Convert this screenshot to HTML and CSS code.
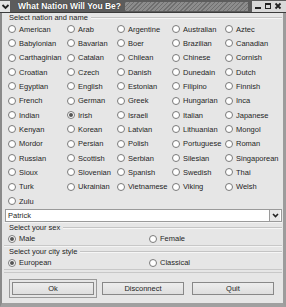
FILE: index.html
```html
<!DOCTYPE html>
<html lang="en">
<head>
  <meta charset="UTF-8">
  <title>What Nation Will You Be?</title>
  <link rel="stylesheet" href="styles.css">
</head>
<body>
<div class="window">
  <!-- Title bar -->
  <div class="titlebar">
    <span class="menu-btn">
      <svg width="9" height="9" viewBox="0 0 9 9"><path d="M1.5 3 L4.5 6 L7.5 3" fill="none" stroke="#222" stroke-width="1.8"/></svg>
    </span>
    <span class="title">What Nation Will You Be?</span>
    <span class="hatch"></span>
    <span class="controls">
      <span class="ctl"><svg width="8" height="8" viewBox="0 0 8 8"><rect x="1" y="5" width="6" height="2" fill="#222"/></svg></span>
      <span class="ctl"><svg width="8" height="8" viewBox="0 0 8 8"><rect x="1.5" y="1.5" width="5" height="5" fill="none" stroke="#222"/><rect x="1" y="1" width="6" height="2" fill="#222"/></svg></span>
      <span class="ctl"><svg width="8" height="8" viewBox="0 0 8 8"><path d="M1.5 1.5 L6.5 6.5 M6.5 1.5 L1.5 6.5" stroke="#222" stroke-width="1.8"/></svg></span>
    </span>
  </div>

  <div class="content">
    <!-- Nation and name -->
    <div class="group">
      <div class="group-title"><span>Select nation and name</span><span class="rule"></span></div>
      <div class="nations">
        <label class="opt"><span class="radio"></span>American</label>
        <label class="opt"><span class="radio"></span>Arab</label>
        <label class="opt"><span class="radio"></span>Argentine</label>
        <label class="opt"><span class="radio"></span>Australian</label>
        <label class="opt"><span class="radio"></span>Aztec</label>
        <label class="opt"><span class="radio"></span>Babylonian</label>
        <label class="opt"><span class="radio"></span>Bavarian</label>
        <label class="opt"><span class="radio"></span>Boer</label>
        <label class="opt"><span class="radio"></span>Brazilian</label>
        <label class="opt"><span class="radio"></span>Canadian</label>
        <label class="opt"><span class="radio"></span>Carthaginian</label>
        <label class="opt"><span class="radio"></span>Catalan</label>
        <label class="opt"><span class="radio"></span>Chilean</label>
        <label class="opt"><span class="radio"></span>Chinese</label>
        <label class="opt"><span class="radio"></span>Cornish</label>
        <label class="opt"><span class="radio"></span>Croatian</label>
        <label class="opt"><span class="radio"></span>Czech</label>
        <label class="opt"><span class="radio"></span>Danish</label>
        <label class="opt"><span class="radio"></span>Dunedain</label>
        <label class="opt"><span class="radio"></span>Dutch</label>
        <label class="opt"><span class="radio"></span>Egyptian</label>
        <label class="opt"><span class="radio"></span>English</label>
        <label class="opt"><span class="radio"></span>Estonian</label>
        <label class="opt"><span class="radio"></span>Filipino</label>
        <label class="opt"><span class="radio"></span>Finnish</label>
        <label class="opt"><span class="radio"></span>French</label>
        <label class="opt"><span class="radio"></span>German</label>
        <label class="opt"><span class="radio"></span>Greek</label>
        <label class="opt"><span class="radio"></span>Hungarian</label>
        <label class="opt"><span class="radio"></span>Inca</label>
        <label class="opt"><span class="radio"></span>Indian</label>
        <label class="opt"><span class="radio checked"></span>Irish</label>
        <label class="opt"><span class="radio"></span>Israeli</label>
        <label class="opt"><span class="radio"></span>Italian</label>
        <label class="opt"><span class="radio"></span>Japanese</label>
        <label class="opt"><span class="radio"></span>Kenyan</label>
        <label class="opt"><span class="radio"></span>Korean</label>
        <label class="opt"><span class="radio"></span>Latvian</label>
        <label class="opt"><span class="radio"></span>Lithuanian</label>
        <label class="opt"><span class="radio"></span>Mongol</label>
        <label class="opt"><span class="radio"></span>Mordor</label>
        <label class="opt"><span class="radio"></span>Persian</label>
        <label class="opt"><span class="radio"></span>Polish</label>
        <label class="opt"><span class="radio"></span>Portuguese</label>
        <label class="opt"><span class="radio"></span>Roman</label>
        <label class="opt"><span class="radio"></span>Russian</label>
        <label class="opt"><span class="radio"></span>Scottish</label>
        <label class="opt"><span class="radio"></span>Serbian</label>
        <label class="opt"><span class="radio"></span>Silesian</label>
        <label class="opt"><span class="radio"></span>Singaporean</label>
        <label class="opt"><span class="radio"></span>Sioux</label>
        <label class="opt"><span class="radio"></span>Slovenian</label>
        <label class="opt"><span class="radio"></span>Spanish</label>
        <label class="opt"><span class="radio"></span>Swedish</label>
        <label class="opt"><span class="radio"></span>Thai</label>
        <label class="opt"><span class="radio"></span>Turk</label>
        <label class="opt"><span class="radio"></span>Ukrainian</label>
        <label class="opt"><span class="radio"></span>Vietnamese</label>
        <label class="opt"><span class="radio"></span>Viking</label>
        <label class="opt"><span class="radio"></span>Welsh</label>
        <label class="opt"><span class="radio"></span>Zulu</label>
      </div>
      <div class="combo">
        <span class="combo-text">Patrick</span>
        <span class="combo-btn">
          <svg width="7" height="7" viewBox="0 0 7 7"><path d="M1 2 L3.5 4.5 L6 2" fill="none" stroke="#222" stroke-width="1.6"/></svg>
        </span>
      </div>
    </div>

    <!-- Sex -->
    <div class="group">
      <div class="group-title"><span>Select your sex</span><span class="rule"></span></div>
      <div class="pair">
        <label class="opt"><span class="radio checked"></span>Male</label>
        <label class="opt"><span class="radio"></span>Female</label>
      </div>
    </div>

    <!-- City style -->
    <div class="group">
      <div class="group-title"><span>Select your city style</span><span class="rule"></span></div>
      <div class="pair">
        <label class="opt"><span class="radio checked"></span>European</label>
        <label class="opt"><span class="radio"></span>Classical</label>
      </div>
    </div>

    <!-- Buttons -->
    <div class="buttons">
      <span class="focus"><button class="btn">Ok</button></span>
      <button class="btn">Disconnect</button>
      <button class="btn">Quit</button>
    </div>
  </div>
</div>
</body>
</html>
```

FILE: styles.css
```css
body {
  margin: 0;
  font-family: "Liberation Sans", Arial, sans-serif;
  font-size: 7.5px;
  color: #1f1f1f;
  background: #e6e6e6;
}
.window {
  width: 286px;
  height: 307px;
  box-sizing: border-box;
  display: flex;
  flex-direction: column;
  background: #e6e6e6;
  border-left: 2px solid #8a8a8a;
  border-right: 3px solid #9c9c9c;
  border-bottom: 4px solid #a0a0a0;
}

/* Title bar */
.titlebar {
  height: 12px;
  display: flex;
  align-items: center;
  background: #5c5c5c;
  border-bottom: 1px solid #3c3c3c;
  margin-left: -2px;
  margin-right: -3px;
}
.menu-btn {
  width: 10px;
  height: 11px;
  display: flex;
  align-items: center;
  justify-content: center;
  background: #e4e4e4;
}
.title {
  color: #fff;
  font-weight: bold;
  font-size: 8.5px;
  margin-left: 8px;
  text-shadow: 0 0 1px #222;
  white-space: nowrap;
}
.hatch {
  flex: 1;
  height: 9px;
  margin: 0 4px;
  background: repeating-linear-gradient(135deg, #6f6f6f 0 1px, #8c8c8c 1px 3px);
}
.controls {
  display: flex;
  align-items: center;
  gap: 2px;
  height: 11px;
  padding: 0 4px 0 2px;
  background: #d9d9d9;
}
.ctl {
  width: 8px;
  height: 8px;
  display: flex;
}

/* Content */
.content {
  flex: 1;
  display: flex;
  flex-direction: column;
  padding: 0 1px 0 2px;
}
.group-title {
  display: flex;
  align-items: center;
  height: 9px;
  padding-left: 5px;
}
.group-title .rule {
  flex: 1;
  margin-left: 3px;
  border-top: 1px solid #c4c4c4;
  border-bottom: 1px solid #f6f6f6;
}
.nations {
  display: grid;
  grid-template-columns: 59px 50px 55px 53px auto;
  grid-auto-rows: 14.33px;
  padding-left: 4px;
}
.opt {
  display: flex;
  align-items: center;
  gap: 3px;
  white-space: nowrap;
}
.radio {
  width: 6px;
  height: 6px;
  border: 1px solid #7c7c7c;
  border-radius: 50%;
  background: radial-gradient(circle at 60% 60%, #fff 0 60%, #e0e0e0 100%);
  display: flex;
  align-items: center;
  justify-content: center;
  flex: none;
}
.radio.checked::after {
  content: "";
  width: 4px;
  height: 4px;
  border-radius: 50%;
  background: #555;
}

.combo {
  height: 13px;
  margin: 1px 0 0 1px;
  box-sizing: border-box;
  display: flex;
  align-items: center;
  background: #fff;
  border: 1px solid #9a9a9a;
}
.combo-text {
  flex: 1;
  padding-left: 2px;
}
.combo-btn {
  width: 10px;
  height: 11px;
  display: flex;
  align-items: center;
  justify-content: center;
  background: #e8e8e8;
  border-left: 1px solid #9a9a9a;
  margin-right: 1px;
}

.group + .group {
  border-top: 1px solid #f4f4f4;
}
.pair {
  display: grid;
  grid-template-columns: 141px auto;
  height: 13px;
  padding-left: 4px;
  border-bottom: 1px solid #c8c8c8;
}
.pair .opt:last-child {
  padding-left: 0;
}

/* Buttons */
.buttons {
  flex: 1;
  display: flex;
  align-items: center;
  gap: 8px;
  padding: 0 8px 0 8px;
  margin-top: 2px;
  border-top: 1px solid #c8c8c8;
}
.focus {
  padding: 2px;
  border: 1px solid #9a9a9a;
  margin-left: -3px;
  margin-right: -3px;
}
.btn {
  width: 82px;
  height: 13px;
  padding: 0;
  font-family: inherit;
  font-size: 7.5px;
  color: #1f1f1f;
  background: linear-gradient(#ededed, #dedede);
  border: 1px solid #888;
  border-radius: 0;
}
```
